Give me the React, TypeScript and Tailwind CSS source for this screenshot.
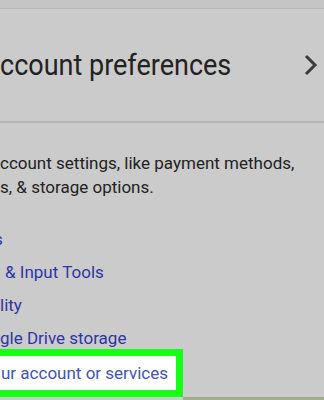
import React from "react";

const links = [
  { label: "s", indent: "-ml-[6px]" },
  { label: "& Input Tools", indent: "ml-[5px]" },
  { label: "lity", indent: "ml-0" },
  { label: "gle Drive storage", indent: "ml-0" },
];

export default function App() {
  return (
    <div className="w-[324px] h-[400px] overflow-hidden bg-[#cbcbcb] font-['Roboto','Liberation_Sans',sans-serif]">
      <div className="h-[9px] bg-[#c5c5c5] border-b border-[#b9b9b9]" />

      <div className="h-[112px] flex items-center justify-between pr-[6px]">
        <h1 className="text-[27px] leading-[32px] text-[#222] whitespace-nowrap origin-left scale-y-[1.1]">ccount preferences</h1>
        <svg width="14" height="22" viewBox="0 0 14 22" fill="none" stroke="#3c3c3c" strokeWidth={3}>
          <polyline points="2,2 11,11 2,20" />
        </svg>
      </div>

      <div className="h-[2px] bg-[#b5b5b5]" />

      <p className="pt-[28px] text-[17px] leading-[24px] text-[#222] whitespace-nowrap">
        ccount settings, like payment methods,
        <br />
        s, &amp; storage options.
      </p>

      <ul className="mt-[23.5px] text-[17px] leading-[33px] text-[#2f35a7]">
        {links.map((l) => (
          <li key={l.label} className={`whitespace-nowrap ${l.indent}`}>
            {l.label}
          </li>
        ))}
      </ul>

      <div className="-mt-[6px] -ml-[10px] w-[193px] h-[48px] border-[7px] border-[#16ff16] bg-white pl-[4px] text-[17px] leading-[34px] text-[#4253b8] whitespace-nowrap">
        ur account or services
      </div>
      <div className="ml-[183px] h-[3px] bg-[#9eae8e]" />
    </div>
  );
}
